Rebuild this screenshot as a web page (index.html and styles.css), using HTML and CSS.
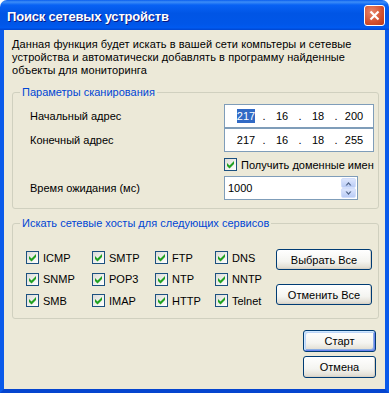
FILE: index.html
```html
<!DOCTYPE html>
<html lang="ru">
<head>
  <meta charset="UTF-8">
  <title>Поиск сетевых устройств</title>
  <link rel="stylesheet" href="styles.css">
</head>
<body>

<div class="window">
  <div class="titlebar">
    <span class="title">Поиск сетевых устройств</span>
    <span class="close">
      <svg width="11" height="11" viewBox="0 0 11 11"><path d="M1.5 1.5 9.5 9.5M9.5 1.5 1.5 9.5" stroke="#fff" stroke-width="2.2" fill="none"/></svg>
    </span>
  </div>

  <div class="client">
    <p class="intro">Данная функция будет искать в вашей сети компьтеры и сетевые<br>устройства и автоматически добавлять в программу найденные<br>объекты для мониторинга</p>

    <fieldset class="group">
      <legend>Параметры сканирования</legend>
      <div class="scan-grid">
        <span class="label">Начальный адрес</span>
        <div class="ip">
          <span class="oct"><span class="sel">217</span></span><span class="dot">.</span>
          <span class="oct">16</span><span class="dot">.</span>
          <span class="oct">18</span><span class="dot">.</span>
          <span class="oct">200</span>
        </div>

        <span class="label">Конечный адрес</span>
        <div class="ip">
          <span class="oct">217</span><span class="dot">.</span>
          <span class="oct">16</span><span class="dot">.</span>
          <span class="oct">18</span><span class="dot">.</span>
          <span class="oct">255</span>
        </div>

        <span class="row-check"></span>
        <label class="opt row-check">
          <span class="check"><svg width="11" height="11" viewBox="0 0 11 11"><path d="M2 4 4.5 6.5 9 2V5L4.5 9.5 2 7z" fill="#21A121"/></svg></span>
          Получить доменные имен
        </label>

        <span class="label row-time">Время ожидания (мс)</span>
        <div class="spin row-time">
          <span class="spin-value">1000</span>
          <span class="spin-btns">
            <span class="spin-btn"><svg width="7" height="5" viewBox="0 0 7 5"><path d="M0.5 4.5 3.5 1 6.5 4.5 5 4.5 3.5 2.8 2 4.5z" fill="#4D6185"/></svg></span>
            <span class="spin-btn"><svg width="7" height="5" viewBox="0 0 7 5"><path d="M0.5 0.5 3.5 4 6.5 0.5 5 0.5 3.5 2.2 2 0.5z" fill="#4D6185"/></svg></span>
          </span>
        </div>
      </div>
    </fieldset>

    <fieldset class="group services">
      <legend>Искать сетевые хосты для следующих сервисов</legend>
      <div class="services-body">
        <div class="svc-grid">
          <label class="opt"><span class="check"><svg width="11" height="11" viewBox="0 0 11 11"><path d="M2 4 4.5 6.5 9 2V5L4.5 9.5 2 7z" fill="#21A121"/></svg></span>ICMP</label>
          <label class="opt"><span class="check"><svg width="11" height="11" viewBox="0 0 11 11"><path d="M2 4 4.5 6.5 9 2V5L4.5 9.5 2 7z" fill="#21A121"/></svg></span>SMTP</label>
          <label class="opt"><span class="check"><svg width="11" height="11" viewBox="0 0 11 11"><path d="M2 4 4.5 6.5 9 2V5L4.5 9.5 2 7z" fill="#21A121"/></svg></span>FTP</label>
          <label class="opt"><span class="check"><svg width="11" height="11" viewBox="0 0 11 11"><path d="M2 4 4.5 6.5 9 2V5L4.5 9.5 2 7z" fill="#21A121"/></svg></span>DNS</label>

          <label class="opt"><span class="check"><svg width="11" height="11" viewBox="0 0 11 11"><path d="M2 4 4.5 6.5 9 2V5L4.5 9.5 2 7z" fill="#21A121"/></svg></span>SNMP</label>
          <label class="opt"><span class="check"><svg width="11" height="11" viewBox="0 0 11 11"><path d="M2 4 4.5 6.5 9 2V5L4.5 9.5 2 7z" fill="#21A121"/></svg></span>POP3</label>
          <label class="opt"><span class="check"><svg width="11" height="11" viewBox="0 0 11 11"><path d="M2 4 4.5 6.5 9 2V5L4.5 9.5 2 7z" fill="#21A121"/></svg></span>NTP</label>
          <label class="opt"><span class="check"><svg width="11" height="11" viewBox="0 0 11 11"><path d="M2 4 4.5 6.5 9 2V5L4.5 9.5 2 7z" fill="#21A121"/></svg></span>NNTP</label>

          <label class="opt"><span class="check"><svg width="11" height="11" viewBox="0 0 11 11"><path d="M2 4 4.5 6.5 9 2V5L4.5 9.5 2 7z" fill="#21A121"/></svg></span>SMB</label>
          <label class="opt"><span class="check"><svg width="11" height="11" viewBox="0 0 11 11"><path d="M2 4 4.5 6.5 9 2V5L4.5 9.5 2 7z" fill="#21A121"/></svg></span>IMAP</label>
          <label class="opt"><span class="check"><svg width="11" height="11" viewBox="0 0 11 11"><path d="M2 4 4.5 6.5 9 2V5L4.5 9.5 2 7z" fill="#21A121"/></svg></span>HTTP</label>
          <label class="opt"><span class="check"><svg width="11" height="11" viewBox="0 0 11 11"><path d="M2 4 4.5 6.5 9 2V5L4.5 9.5 2 7z" fill="#21A121"/></svg></span>Telnet</label>
        </div>
        <div class="svc-buttons">
          <button class="btn wide">Выбрать Все</button>
          <button class="btn wide">Отменить Все</button>
        </div>
      </div>
    </fieldset>

    <div class="actions">
      <button class="btn default">Старт</button>
      <button class="btn">Отмена</button>
    </div>
  </div>
</div>

</body>
</html>
```

FILE: styles.css
```css
body {
  margin: 0;
  background: #fff;
  font-family: "Liberation Sans", Arial, sans-serif;
  font-size: 11px;
  color: #000;
}

.window {
  width: 389px;
  height: 393px;
  display: flex;
  flex-direction: column;
}

/* title bar */
.titlebar {
  height: 30px;
  flex: none;
  box-sizing: border-box;
  padding: 0 4px 0 7px;
  display: flex;
  align-items: center;
  justify-content: space-between;
  border-radius: 7px 7px 0 0;
  background: linear-gradient(to bottom, #0A5DEE 0, #3D8EF7 2px, #0862F4 5px, #0055E5 45%, #0056E8 80%, #005AF0 92%, #0046D0 100%);
}

.title {
  color: #fff;
  font-weight: bold;
  font-size: 13px;
  letter-spacing: -0.2px;
  padding-top: 2px;
  text-shadow: 1px 1px 0 #0A1883;
}

.close {
  width: 21px;
  height: 21px;
  box-sizing: border-box;
  border: 1px solid #fff;
  border-radius: 3px;
  background: radial-gradient(circle at 35% 30%, #E8856A, #D2502E 60%, #B8391A);
  display: flex;
  align-items: center;
  justify-content: center;
  margin-top: 1px;
}

/* client area */
.client {
  flex: 1;
  background: #ECE9D8;
  border: 4px solid #0A5AEA;
  border-top: 0;
  border-bottom-color: #0545CF;
  padding: 8px 6px 0 8px;
}

.intro {
  margin: 0;
  line-height: 13px;
  letter-spacing: 0.08px;
}

.group {
  margin: 9px 0 0;
  padding: 0;
  min-width: 0;
  border: 1px solid #D0D0BF;
  border-radius: 3px;
}

.group legend {
  margin-left: 7px;
  padding: 0 2px;
  line-height: 13px;
  color: #0046D5;
}

.services {
  margin-top: 8px;
}

/* scan parameters */
.scan-grid {
  display: grid;
  grid-template-columns: 194px 150px;
  align-items: center;
  padding: 5px 0 8px 17px;
}

.row-check {
  margin-top: 6px;
}

.row-time {
  margin-top: 5px;
}

.ip {
  height: 24px;
  box-sizing: border-box;
  border: 1px solid #7F9DB9;
  background: #fff;
  padding-left: 7px;
  display: flex;
  align-items: center;
}

.oct {
  width: 28px;
  text-align: center;
}

.dot {
  width: 8px;
  text-align: center;
}

.sel {
  background: #316AC5;
  color: #fff;
  padding: 1px 0;
}

.opt {
  display: flex;
  align-items: center;
  gap: 4px;
  height: 13px;
  white-space: nowrap;
}

.check {
  width: 13px;
  height: 13px;
  flex: none;
  box-sizing: border-box;
  border: 1px solid #1C5180;
  background: linear-gradient(135deg, #DCDCD7, #FFFFFF);
  display: flex;
  align-items: center;
  justify-content: center;
}

.spin {
  width: 134px;
  height: 24px;
  box-sizing: border-box;
  border: 1px solid #7F9DB9;
  background: #fff;
  display: flex;
  align-items: center;
}

.spin-value {
  flex: 1;
  padding-left: 3px;
}

.spin-btns {
  display: flex;
  flex-direction: column;
  align-self: stretch;
  justify-content: center;
  padding: 1px;
}

.spin-btn {
  width: 15px;
  height: 10px;
  box-sizing: border-box;
  border: 1px solid #D2DEFB;
  border-radius: 2px;
  background: linear-gradient(#DDE6FD, #B9CCF6);
  display: flex;
  align-items: center;
  justify-content: center;
}

/* services */
.services-body {
  display: flex;
  align-items: flex-start;
  padding: 19px 0 11px 13px;
}

.svc-grid {
  display: grid;
  grid-template-columns: 66px 63px 60px 61px;
  row-gap: 8.5px;
  margin-top: 2px;
}

.svc-buttons {
  display: flex;
  flex-direction: column;
  gap: 14px;
}

/* buttons */
.btn {
  width: 73px;
  height: 22px;
  padding: 0;
  font-family: inherit;
  font-size: 11px;
  color: #000;
  border: 1px solid #003C74;
  border-radius: 3px;
  background: linear-gradient(#FFFFFF, #F4F4F0 60%, #E3E0D6 90%, #D6D0C5);
  box-shadow: inset -1px -1px 0 #D8D2C6;
}

.btn.wide {
  width: 96px;
  height: 21px;
}

.btn.default {
  box-shadow: inset 1px 1px 0 #CEE7FF, inset -1px -1px 0 #6982EE, inset 2px 2px 0 #BCD4F6, inset -2px -2px 0 #89ADE4;
}

.actions {
  display: flex;
  flex-direction: column;
  align-items: flex-end;
  gap: 4px;
  margin-top: 11px;
  padding-right: 3px;
}
```
